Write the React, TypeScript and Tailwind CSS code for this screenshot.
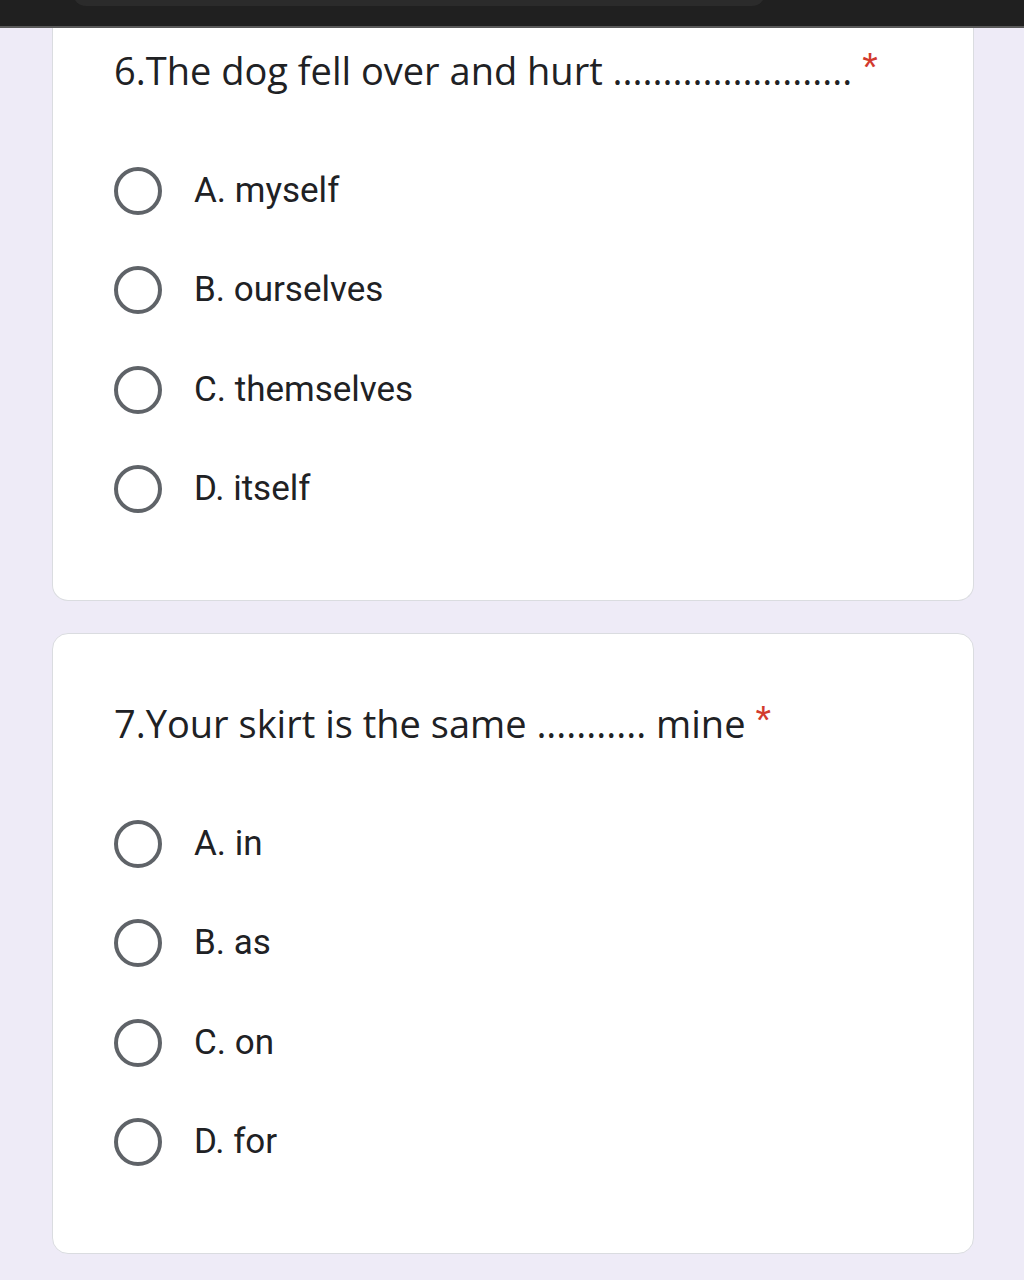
import React from 'react';

interface Question {
  title: string;
  options: string[];
}

const questions: Question[] = [
  {
    title: '6.The dog fell over and hurt ........................',
    options: ['A. myself', 'B. ourselves', 'C. themselves', 'D. itself'],
  },
  {
    title: '7.Your skirt is the same ........... mine',
    options: ['A. in', 'B. as', 'C. on', 'D. for'],
  },
];

function Radio() {
  return <div className="h-[48px] w-[48px] shrink-0 rounded-full border-[4px] border-[#5f6368]" />;
}

function QuestionCard({ q, first }: { q: Question; first?: boolean }) {
  return (
    <div
      className={
        first
          ? 'bg-white border-x border-b border-[#dadce0] rounded-b-[16px] pt-[18px] pb-[61px]'
          : 'bg-white border border-[#dadce0] rounded-[16px] pt-[65px] pb-[61px]'
      }
    >
      <div className="pl-[61px] pr-[40px] flex items-start h-[48px]">
        <span className="text-[38px] leading-[48px] text-[#202124] whitespace-nowrap" style={{ fontFamily: '"Open Sans", sans-serif' }}>
          {q.title}
        </span>
        <span className="ml-[10px] text-[40px] leading-[42px] text-[#d23a2e]" style={{ fontFamily: '"Liberation Sans", sans-serif' }}>
          *
        </span>
      </div>
      <div className="mt-[47px] flex flex-col">
        {q.options.map((o) => (
          <div key={o} className="h-[99.5px] flex items-center pl-[61px] gap-[32px]">
            <Radio />
            <span className="text-[35px] text-[#202124]" style={{ fontFamily: 'Roboto, sans-serif' }}>
              {o}
            </span>
          </div>
        ))}
      </div>
    </div>
  );
}

export default function App() {
  return (
    <div className="w-[1024px] h-[1280px] bg-[#eeebf7] overflow-hidden">
      <div className="h-[26px] bg-[#202020] relative">
        <div className="absolute left-[73px] w-[692px] -top-[20px] h-[26px] rounded-[14px] bg-[#2b2b2b]" />
      </div>
      <div className="h-[2px] bg-[#5a5a5a]" />
      <div className="pl-[52px] pr-[50px] flex flex-col gap-[32px]">
        <QuestionCard q={questions[0]} first />
        <QuestionCard q={questions[1]} />
      </div>
    </div>
  );
}
